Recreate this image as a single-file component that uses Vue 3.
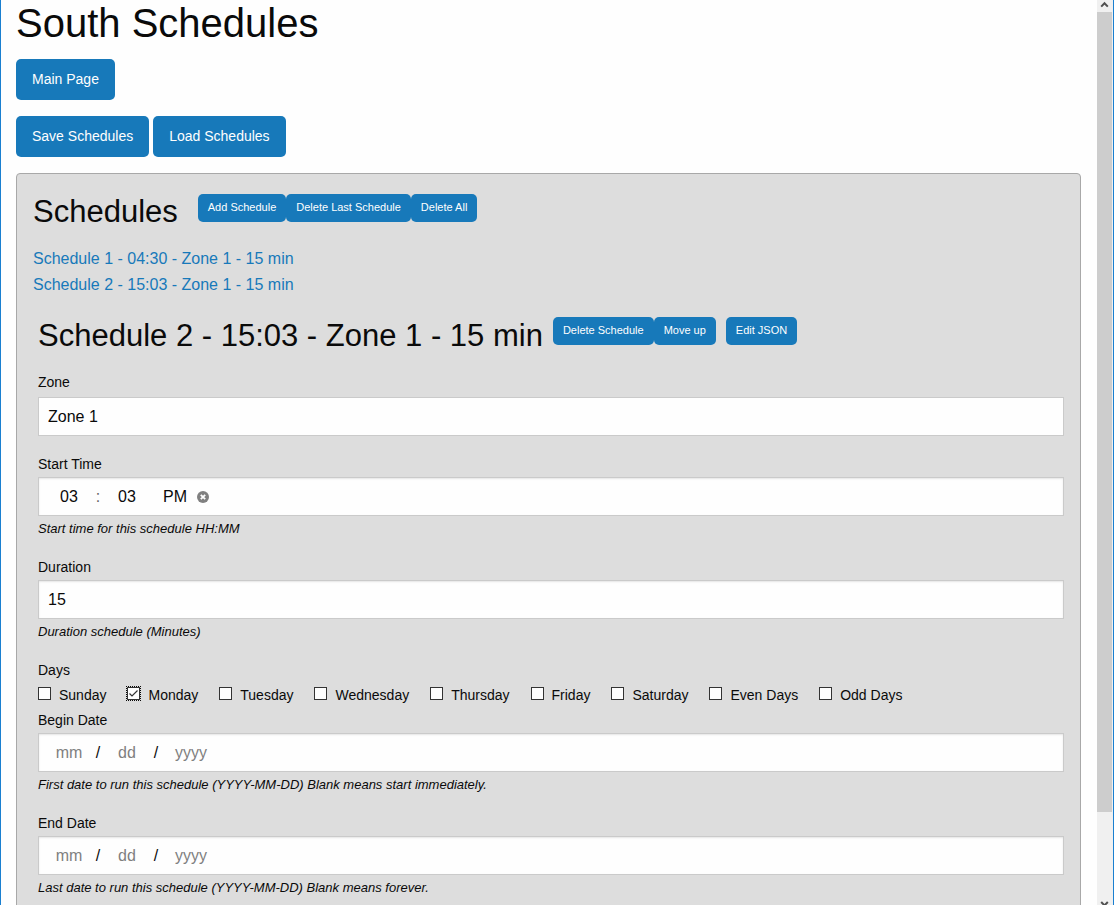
<script setup>
import { reactive, ref } from 'vue'

const schedules = ['Schedule 1 - 04:30 - Zone 1 - 15 min', 'Schedule 2 - 15:03 - Zone 1 - 15 min']
const zone = ref('Zone 1')
const duration = ref('15')
const time = reactive({ hour: '03', minute: '03', half: 'PM' })
const days = reactive([
  { name: 'Sunday', on: false },
  { name: 'Monday', on: true, focus: true },
  { name: 'Tuesday', on: false },
  { name: 'Wednesday', on: false },
  { name: 'Thursday', on: false },
  { name: 'Friday', on: false },
  { name: 'Saturday', on: false },
  { name: 'Even Days', on: false },
  { name: 'Odd Days', on: false },
])
const dates = [
  { id: 'begin', label: 'Begin Date', help: 'First date to run this schedule (YYYY-MM-DD) Blank means start immediately.' },
  { id: 'end', label: 'End Date', help: 'Last date to run this schedule (YYYY-MM-DD) Blank means forever.' },
]
function clearTime() {
  time.hour = time.minute = time.half = ''
}
</script>

<template>
  <div class="window">
    <main class="page">
      <h1>South Schedules</h1>
      <div class="actions"><button class="button" type="button">Main Page</button></div>
      <div class="actions">
        <button class="button" type="button">Save Schedules</button>
        <button class="button" type="button">Load Schedules</button>
      </div>

      <section class="panel">
        <header class="heading list-heading">
          <h3>Schedules</h3>
          <div class="group">
            <button class="button small" type="button">Add Schedule</button>
            <button class="button small" type="button">Delete Last Schedule</button>
            <button class="button small" type="button">Delete All</button>
          </div>
        </header>
        <nav class="links">
          <a v-for="s in schedules" :key="s" href="#">{{ s }}</a>
        </nav>

        <form class="editor" @submit.prevent>
          <header class="heading">
            <h3>{{ schedules[1] }}</h3>
            <div class="group">
              <button class="button small" type="button">Delete Schedule</button>
              <button class="button small" type="button">Move up</button>
            </div>
            <button class="button small" type="button">Edit JSON</button>
          </header>

          <div class="field zone">
            <label for="zone">Zone</label>
            <select id="zone" v-model="zone" class="box">
              <option>Zone 1</option>
              <option>Zone 2</option>
            </select>
          </div>

          <div class="field">
            <label for="hour">Start Time</label>
            <div class="box parts">
              <input id="hour" v-model="time.hour" type="text" />
              <span class="sep colon">:</span>
              <input v-model="time.minute" type="text" aria-label="Minute" />
              <input v-model="time.half" class="half" type="text" aria-label="AM or PM" />
              <button class="clear" type="button" aria-label="Clear" @click="clearTime">
                <svg viewBox="0 0 12 12" width="12" height="12">
                  <circle cx="6" cy="6" r="6" fill="#808080" />
                  <path d="M3.8 3.8l4.4 4.4M8.2 3.8l-4.4 4.4" stroke="#fefefe" stroke-width="1.8" />
                </svg>
              </button>
            </div>
            <p class="help">Start time for this schedule HH:MM</p>
          </div>

          <div class="field">
            <label for="duration">Duration</label>
            <input id="duration" v-model="duration" class="box" type="text" />
            <p class="help">Duration schedule (Minutes)</p>
          </div>

          <fieldset class="days">
            <legend>Days</legend>
            <div class="day-row">
              <label v-for="d in days" :key="d.name" class="day">
                <input v-model="d.on" type="checkbox" :class="{ focused: d.focus }" />
                {{ d.name }}
              </label>
            </div>
          </fieldset>

          <div v-for="d in dates" :key="d.id" class="field">
            <label :for="d.id">{{ d.label }}</label>
            <div class="box parts">
              <input :id="d.id" type="text" placeholder="mm" />
              <span class="sep">/</span>
              <input type="text" placeholder="dd" :aria-label="d.label + ' day'" />
              <span class="sep">/</span>
              <input class="year" type="text" placeholder="yyyy" :aria-label="d.label + ' year'" />
            </div>
            <p class="help">{{ d.help }}</p>
          </div>
        </form>
      </section>
    </main>

    <div class="scrollbar" aria-hidden="true">
      <svg class="arrow" viewBox="0 0 15 12" width="15" height="12">
        <path d="M4.2 6.6L7.5 3.2l3.3 3.4" fill="none" stroke="#505050" stroke-width="2" />
      </svg>
      <div class="track"><div class="thumb"></div></div>
      <svg class="arrow" viewBox="0 0 15 4" width="15" height="4">
        <path d="M4.2 1l3.3 3.4L10.8 1" fill="none" stroke="#505050" stroke-width="2" />
      </svg>
    </div>
  </div>
</template>

<style>
body {
  margin: 0;
  background: #fefefe;
}
</style>

<style scoped>
.window,
.window * {
  box-sizing: border-box;
}
.window {
  display: flex;
  height: 100vh;
  overflow: hidden;
  border: solid #1a7fd0;
  border-width: 0 1px;
  background: #fefefe;
  color: #0a0a0a;
  font-family: "Liberation Sans", Arial, sans-serif;
  font-size: 14px;
}
.page {
  flex: 1;
  min-width: 0;
  padding: 0 16px 0 15px;
}
h1,
h3 {
  margin: 0;
  font-weight: 400;
}
h1 {
  margin-bottom: 13px;
  font-size: 40px;
  line-height: 46px;
}
h3 {
  font-size: 31px;
  line-height: 43px;
}
.actions {
  display: flex;
  gap: 4px;
  margin-bottom: 16px;
}
.button {
  height: 41px;
  padding: 0 16px 2px;
  border: 0;
  border-radius: 5px;
  background: #1779ba;
  color: #fefefe;
  font: inherit;
  white-space: nowrap;
}
.button.small {
  height: 28px;
  margin-top: 4px;
  padding: 0 10px 2px;
  font-size: 11px;
}
.panel {
  padding: 16px;
  border: 1px solid #a8a8a8;
  border-radius: 4px;
  background: #dddddd;
}
.heading {
  display: flex;
  align-items: flex-start;
  gap: 10px;
}
.list-heading {
  gap: 20px;
}
.group {
  display: flex;
}
.links {
  display: flex;
  flex-direction: column;
  align-items: flex-start;
  margin: 13px 0 16px;
  font-size: 16px;
  line-height: 26px;
}
.links a {
  color: #1779ba;
  text-decoration: none;
}
.editor {
  padding-left: 5px;
}
.editor .button.small {
  margin-top: 3px;
}
.field {
  margin-bottom: 14px;
}
.field > label,
legend {
  display: block;
  margin-bottom: 2px;
  padding: 0;
  line-height: 22px;
}
.zone {
  margin-top: 14px;
  margin-bottom: 17px;
}
.zone > label {
  margin-bottom: 4px;
}
.box {
  display: block;
  width: 100%;
  height: 39px;
  margin: 0;
  padding: 0 9px;
  border: 1px solid #cacaca;
  border-radius: 0;
  outline: 0;
  appearance: none;
  background: #fefefe;
  box-shadow: inset 0 1px 2px rgba(10, 10, 10, 0.1);
  color: #0a0a0a;
  font: inherit;
  font-size: 16px;
}
select.box {
  box-shadow: none;
}
.parts {
  display: flex;
  align-items: center;
  padding: 0 12px;
}
.parts input {
  width: 36px;
  padding: 0;
  border: 0;
  outline: 0;
  background: transparent;
  color: inherit;
  font: inherit;
  text-align: center;
}
.parts input::placeholder {
  color: #808080;
  opacity: 1;
}
.parts .half {
  margin-left: 12px;
}
.parts .year {
  width: 48px;
}
.sep {
  width: 22px;
  text-align: center;
}
.colon {
  color: #666666;
}
.clear {
  display: flex;
  margin: 0 0 0 4px;
  padding: 0;
  border: 0;
  background: none;
}
.help {
  margin: 0;
  font-size: 13px;
  font-style: italic;
  line-height: 26px;
}
.days {
  margin: 0 0 2px;
  padding: 0;
  border: 0;
}
.day-row {
  display: flex;
  flex-wrap: wrap;
  gap: 0 21px;
}
.day {
  display: flex;
  align-items: center;
  gap: 8px;
  line-height: 24px;
}
.day input {
  width: 13px;
  height: 13px;
  margin: 0 0 4px;
  border: 1px solid #333333;
  appearance: none;
  background: #fefefe;
}
.day input.focused {
  outline: 1px dotted #0a0a0a;
}
.day input:checked {
  background: #fefefe url("data:image/svg+xml,%3Csvg xmlns='http://www.w3.org/2000/svg' viewBox='0 0 11 11'%3E%3Cpath d='M1.5 5.5L4 8l5.5-5.5' fill='none' stroke='%23333' stroke-width='1.2'/%3E%3C/svg%3E") center / 11px 11px no-repeat;
}
.scrollbar {
  display: flex;
  flex-direction: column;
  width: 16px;
  padding-right: 1px;
  background: #f0f0f0;
}
.arrow {
  display: block;
  flex: none;
}
.track {
  flex: 1;
}
.thumb {
  height: 90%;
  background: #cdcdcd;
}
</style>
